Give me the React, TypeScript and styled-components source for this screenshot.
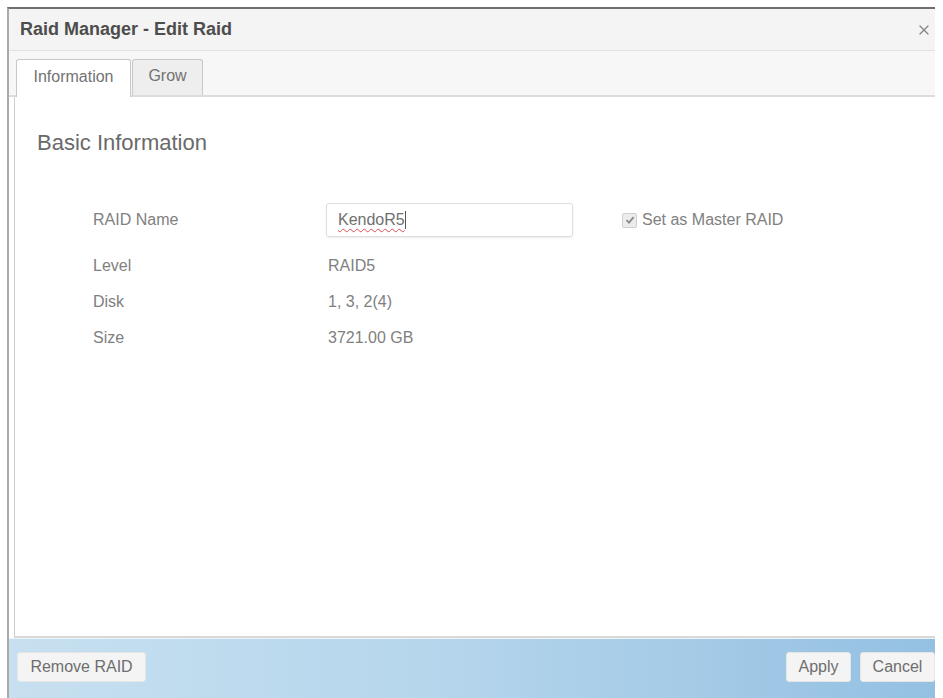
import React from 'react';
import styled, { createGlobalStyle } from 'styled-components';
import { X } from 'lucide-react';

const GlobalStyle = createGlobalStyle`
  html, body {
    margin: 0;
    padding: 0;
    background: #ffffff;
    font-family: "Liberation Sans", Arial, sans-serif;
    overflow: hidden;
  }
`;

const Window = styled.div`
  margin: 7px 0 0 7px;
  width: 928px;
  height: calc(100vh - 7px);
  display: flex;
  flex-direction: column;
  border-top: 2px solid #6f6f6f;
  border-left: 2px solid #a9a9a9;
  box-sizing: border-box;
  background: #ffffff;
`;

const TitleBar = styled.div`
  height: 41px;
  flex-shrink: 0;
  display: flex;
  align-items: center;
  justify-content: space-between;
  padding: 0 3px 0 11px;
  background: #f4f4f4;
  border-bottom: 1px solid #e2e2e2;
  color: #4d4d4d;
  font-size: 18px;
  font-weight: 700;
`;

const CloseButton = styled.span`
  display: flex;
  color: #8a8a8a;
`;

const TabStrip = styled.div`
  height: 46px;
  flex-shrink: 0;
  display: flex;
  align-items: flex-end;
  padding-left: 7px;
  background: #f7f7f7;
  border-bottom: 2px solid #dcdcdc;
  box-sizing: border-box;
`;

const Tab = styled.div<{ $active?: boolean }>`
  height: ${(p) => (p.$active ? '38px' : '36px')};
  margin-bottom: ${(p) => (p.$active ? '-2px' : '0')};
  display: flex;
  align-items: center;
  justify-content: center;
  padding: 0 0 3px;
  width: ${(p) => (p.$active ? '115px' : '71px')};
  margin-right: 1px;
  box-sizing: border-box;
  border: 1px solid #c9c9c9;
  border-bottom: none;
  border-radius: 3px 3px 0 0;
  background: ${(p) => (p.$active ? '#ffffff' : '#eeeeee')};
  color: #727272;
  font-size: 16px;
`;

const Content = styled.div`
  flex: 1;
  margin-left: 5px;
  border-left: 1px solid #cfcfcf;
  border-bottom: 2px solid #d8d8d8;
  padding: 34px 0 0 22px;
  background: #ffffff;
`;

const Heading = styled.div`
  font-size: 22px;
  line-height: 24px;
  color: #6a6a6a;
  margin-bottom: 48px;
`;

const FieldGrid = styled.div`
  display: grid;
  grid-template-columns: 235px 294px auto;
  grid-auto-rows: 36px;
  grid-template-rows: 34px;
  margin-left: 56px;
  align-items: center;
  color: #808080;
  font-size: 16px;

  & > *:nth-child(n + 4) {
    padding-top: 21px;
  }
`;

const Cell = styled.div`
  display: flex;
  align-items: center;
`;

const TextBox = styled.div`
  width: 247px;
  height: 34px;
  margin-left: -2px;
  box-sizing: border-box;
  border: 1px solid #dedede;
  border-radius: 3px;
  box-shadow: 0 1px 2px rgba(0, 0, 0, 0.08);
  display: flex;
  align-items: center;
  padding-left: 11px;
  color: #707070;
`;

const Misspelled = styled.span`
  text-decoration: underline wavy #e0505a;
  text-decoration-thickness: 1px;
  text-underline-offset: 3px;
`;

const Caret = styled.span`
  display: inline-block;
  width: 1px;
  height: 18px;
  background: #555;
`;

const CheckLabel = styled.label`
  display: flex;
  align-items: center;
  gap: 5px;
  color: #808080;
  font-size: 16px;
`;

const CheckBox = styled.span`
  width: 13px;
  height: 13px;
  border: 1px solid #cfcfcf;
  border-radius: 2px;
  background: #ececec;
  display: flex;
  align-items: center;
  justify-content: center;
`;

const Footer = styled.div`
  height: 60px;
  flex-shrink: 0;
  display: flex;
  align-items: flex-start;
  justify-content: space-between;
  padding: 13px 0 0 8px;
  box-sizing: border-box;
  border-top: 1px solid #eef3f7;
  background: linear-gradient(90deg, #c7e0f0 0%, #b6d6ec 45%, #94c0e2 100%);
`;

const ButtonGroup = styled.div`
  display: flex;
  gap: 9px;
`;

const Button = styled.div<{ $width: number }>`
  width: ${(p) => p.$width}px;
  height: 30px;
  box-sizing: border-box;
  display: flex;
  align-items: center;
  justify-content: center;
  background: #f4f4f4;
  border: 1px solid #e6e6e6;
  border-radius: 3px;
  color: #6e6e6e;
  font-size: 16px;
`;

const rows = [
  { label: 'Level', value: 'RAID5' },
  { label: 'Disk', value: '1, 3, 2(4)' },
  { label: 'Size', value: '3721.00 GB' },
];

export default function App() {
  return (
    <>
      <GlobalStyle />
      <Window>
        <TitleBar>
          <span>Raid Manager - Edit Raid</span>
          <CloseButton>
            <X size={16} strokeWidth={2} />
          </CloseButton>
        </TitleBar>
        <TabStrip>
          <Tab $active>Information</Tab>
          <Tab>Grow</Tab>
        </TabStrip>
        <Content>
          <Heading>Basic Information</Heading>
          <FieldGrid>
            <Cell>RAID Name</Cell>
            <Cell>
              <TextBox>
                <Misspelled>KendoR5</Misspelled>
                <Caret />
              </TextBox>
            </Cell>
            <Cell>
              <CheckLabel>
                <CheckBox>
                  <svg width="10" height="10" viewBox="0 0 10 10">
                    <path d="M1.5 5.2 L4 7.6 L8.6 2.2" fill="none" stroke="#8a8a8a" strokeWidth="1.8" />
                  </svg>
                </CheckBox>
                Set as Master RAID
              </CheckLabel>
            </Cell>
            {rows.map((r) => (
              <React.Fragment key={r.label}>
                <Cell>{r.label}</Cell>
                <Cell>{r.value}</Cell>
                <Cell />
              </React.Fragment>
            ))}
          </FieldGrid>
        </Content>
        <Footer>
          <Button $width={129}>Remove RAID</Button>
          <ButtonGroup>
            <Button $width={65}>Apply</Button>
            <Button $width={75}>Cancel</Button>
          </ButtonGroup>
        </Footer>
      </Window>
    </>
  );
}
